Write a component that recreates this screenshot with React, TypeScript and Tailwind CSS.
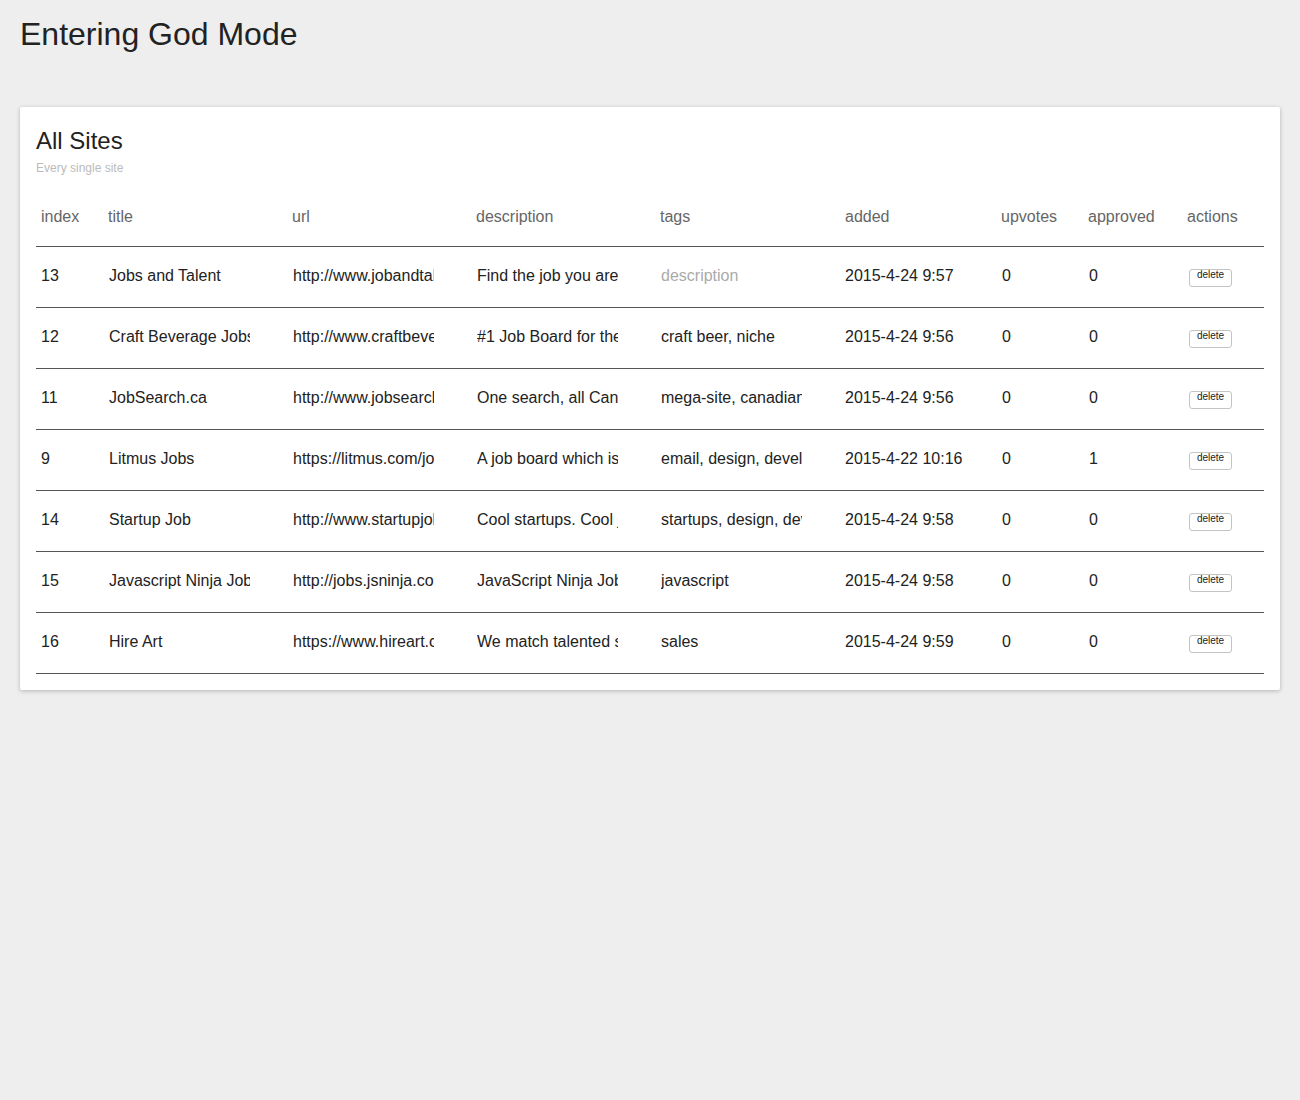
import React from "react";

const rows = [
  { i: "13", title: "Jobs and Talent", url: "http://www.jobandtalent.com", desc: "Find the job you are looking for", tags: "", added: "2015-4-24 9:57", up: "0", ap: "0" },
  { i: "12", title: "Craft Beverage Jobs", url: "http://www.craftbeveragejobs.com", desc: "#1 Job Board for the craft beverage industry", tags: "craft beer, niche", added: "2015-4-24 9:56", up: "0", ap: "0" },
  { i: "11", title: "JobSearch.ca", url: "http://www.jobsearch.ca", desc: "One search, all Canadian jobs", tags: "mega-site, canadian", added: "2015-4-24 9:56", up: "0", ap: "0" },
  { i: "9", title: "Litmus Jobs", url: "https://litmus.com/jobs", desc: "A job board which is focused on email", tags: "email, design, development", added: "2015-4-22 10:16", up: "0", ap: "1" },
  { i: "14", title: "Startup Job", url: "http://www.startupjob.com", desc: "Cool startups. Cool jobs.", tags: "startups, design, development", added: "2015-4-24 9:58", up: "0", ap: "0" },
  { i: "15", title: "Javascript Ninja Jobs", url: "http://jobs.jsninja.com", desc: "JavaScript Ninja Jobs board", tags: "javascript", added: "2015-4-24 9:58", up: "0", ap: "0" },
  { i: "16", title: "Hire Art", url: "https://www.hireart.com", desc: "We match talented sales people", tags: "sales", added: "2015-4-24 9:59", up: "0", ap: "0" },
];

const grid = "grid grid-cols-[67px_184px_184px_184px_185px_156px_87px_99px_82px] items-center";

function Field({ value, placeholder }: { value: string; placeholder?: string }) {
  return (
    <input
      readOnly
      value={value}
      placeholder={placeholder}
      className="w-[141px] bg-transparent outline-none border-0 p-0 ml-[1px] text-[16px] text-[#222] placeholder:text-[#aaa]"
      style={{ fontFamily: "inherit" }}
    />
  );
}

export default function App() {
  return (
    <div
      className="min-h-[1100px] bg-[#eeeeee] px-[20px] text-[#222]"
      style={{ fontFamily: '"Liberation Sans", Arial, sans-serif' }}
    >
      <h1 className="pt-[14px] text-[32px] leading-[40px] text-[#222]">Entering God Mode</h1>
      <div className="mt-[53px] bg-white rounded-[2px] shadow-[0_1px_4px_rgba(0,0,0,0.25)] px-[16px] pt-[16px] pb-[16px]">
        <div className="text-[24px] leading-[36px] text-[#222]">All Sites</div>
        <div className="mt-[2px] text-[12px] leading-[14px] text-[#bbb]">Every single site</div>
        <div className="mt-[11px]">
          <div className={`${grid} h-[61px] pt-[2px] border-b border-[#555] text-[16px] text-[#666]`}>
            {["index", "title", "url", "description", "tags", "added", "upvotes", "approved", "actions"].map((h) => (
              <div key={h} className="pl-[5px]">{h}</div>
            ))}
          </div>
          {rows.map((r) => (
            <div key={r.i} className={`${grid} h-[61px] pb-[2px] border-b border-[#555] text-[16px] text-[#222]`}>
              <div className="pl-[5px]">{r.i}</div>
              <div className="pl-[5px]"><Field value={r.title} /></div>
              <div className="pl-[5px]"><Field value={r.url} /></div>
              <div className="pl-[5px]"><Field value={r.desc} /></div>
              <div className="pl-[5px]"><Field value={r.tags} placeholder="description" /></div>
              <div className="pl-[5px]">{r.added}</div>
              <div className="pl-[6px]">{r.up}</div>
              <div className="pl-[6px]">{r.ap}</div>
              <div className="pl-[7px] mb-[4px]">
                <button className="w-[43px] h-[18px] border border-[#c4c4c4] rounded-[3px] bg-white text-[10px] leading-none text-[#222] pb-[5px]">
                  delete
                </button>
              </div>
            </div>
          ))}
        </div>
      </div>
    </div>
  );
}
